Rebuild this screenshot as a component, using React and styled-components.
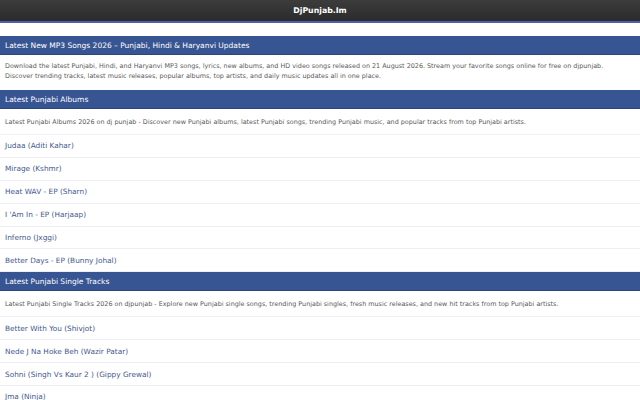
import React from "react";
import styled, { createGlobalStyle } from "styled-components";

const Global = createGlobalStyle`
  html, body { margin: 0; padding: 0; background: #fff; }
  body { font-family: "DejaVu Sans", "Noto Sans", sans-serif; }
  * { box-sizing: border-box; }
`;

const Header = styled.header`
  height: 23px;
  background: linear-gradient(#3c3c3c, #2b2b2b);
  border-bottom: 2px solid #4f5fae;
  display: flex;
  align-items: center;
  justify-content: center;
`;

const Logo = styled.a`
  color: #fff;
  font-weight: bold;
  font-size: 7.8px;
  text-decoration: none;
`;

const Spacer = styled.div`
  height: 13px;
`;

const Bar = styled.h2`
  margin: 0;
  height: 19px;
  background: #385593;
  border-bottom: 1px solid #2c4478;
  color: #fff;
  font-weight: normal;
  font-size: 7.5px;
  display: flex;
  align-items: center;
  padding: 0 5px;
  white-space: nowrap;
`;

const Intro = styled.p`
  margin: 0;
  padding: 6px 5px 9px;
  font-size: 6.42px;
  line-height: 10px;
  color: #5a5a5a;
`;

const Desc = styled.p`
  margin: 0;
  padding: 9px 5px 7px;
  font-size: 6.42px;
  line-height: 9px;
  color: #5a5a5a;
  border-bottom: 1px solid #eef0f3;
`;

const List = styled.ul`
  list-style: none;
  margin: 0;
  padding: 0;
`;

const Item = styled.li`
  height: 22.9px;
  display: flex;
  align-items: center;
  padding: 0 5px;
  border-bottom: 1px solid #eceef1;
  font-size: 7.35px;
  a {
    color: #43598e;
    text-decoration: none;
  }
`;

const Section = styled.section``;

const albums = [
  "Judaa (Aditi Kahar)",
  "Mirage (Kshmr)",
  "Heat WAV - EP (Sharn)",
  "I 'Am In - EP (Harjaap)",
  "Inferno (Jxggi)",
  "Better Days - EP (Bunny Johal)",
];

const singles = [
  "Better With You (Shivjot)",
  "Nede J Na Hoke Beh (Wazir Patar)",
  "Sohni (Singh Vs Kaur 2 ) (Gippy Grewal)",
  "Jma (Ninja)",
];

export default function App() {
  return (
    <>
      <Global />
      <Header>
        <Logo href="#">DjPunjab.Im</Logo>
      </Header>
      <Spacer />
      <Section>
        <Bar as="h1">
          Latest New MP3 Songs 2026 – Punjabi, Hindi &amp; Haryanvi Updates
        </Bar>
        <Intro>
          Download the latest Punjabi, Hindi, and Haryanvi MP3 songs, lyrics, new albums, and HD video songs released on 21 August 2026. Stream your favorite songs online for free on djpunjab.
          <br />
          Discover trending tracks, latest music releases, popular albums, top artists, and daily music updates all in one place.
        </Intro>
      </Section>
      <Section>
        <Bar>Latest Punjabi Albums</Bar>
        <Desc>
          Latest Punjabi Albums 2026 on dj punjab - Discover new Punjabi albums, latest Punjabi songs, trending Punjabi music, and popular tracks from top Punjabi artists.
        </Desc>
        <List>
          {albums.map((a) => (
            <Item key={a}>
              <a href="#">{a}</a>
            </Item>
          ))}
        </List>
      </Section>
      <Section>
        <Bar>Latest Punjabi Single Tracks</Bar>
        <Desc>
          Latest Punjabi Single Tracks 2026 on djpunjab - Explore new Punjabi single songs, trending Punjabi singles, fresh music releases, and new hit tracks from top Punjabi artists.
        </Desc>
        <List>
          {singles.map((a) => (
            <Item key={a}>
              <a href="#">{a}</a>
            </Item>
          ))}
        </List>
      </Section>
    </>
  );
}
